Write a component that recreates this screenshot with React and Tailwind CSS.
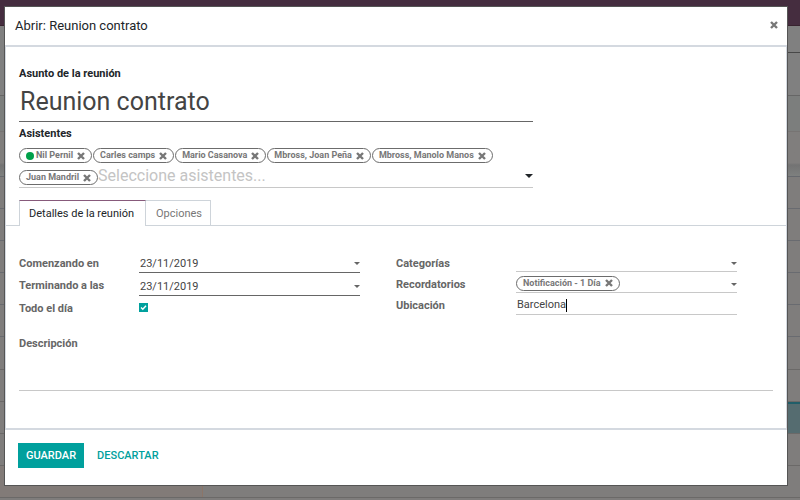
import React from 'react';

function Caret({ className }) {
  return (
    <svg viewBox="0 0 8 4" aria-hidden="true" className={className}>
      <path d="M0 0h8L4 4z" fill="currentColor" />
    </svg>
  );
}

function Cross({ className }) {
  return (
    <svg viewBox="0 0 8 8" aria-hidden="true" className={className}>
      <path d="M1 1l6 6M7 1L1 7" stroke="currentColor" strokeWidth="2.4" fill="none" />
    </svg>
  );
}

function Tag({ children, online }) {
  return (
    <li className="flex h-[15px] items-center rounded-full border border-[#6c6c6c] px-[6px] text-[9px] font-bold leading-[13px] whitespace-nowrap text-[#777]">
      {online && <span className="mr-0.5 size-2 rounded-full bg-[#00a04a]" />}
      {children}
      <button type="button" aria-label="Quitar" className="ml-1">
        <Cross className="size-2" />
      </button>
    </li>
  );
}

function Row({ id, label, height, border, children }) {
  return (
    <div className="flex">
      <label htmlFor={id} className="w-[120px] shrink-0 pt-1 font-bold leading-[14px] text-[#666]">
        {label}
      </label>
      <div className={`flex min-w-0 flex-1 items-center ${height} ${border}`}>{children}</div>
    </div>
  );
}

function DateField({ id }) {
  return (
    <>
      <input id={id} defaultValue="23/11/2019" className="h-full min-w-0 flex-1 px-px pt-0.5 text-[#444] outline-none" />
      <button type="button" aria-label="Abrir calendario" className="pt-0.5">
        <Caret className="h-[3px] w-[6px] text-[#666]" />
      </button>
    </>
  );
}

const line = 'border-b border-[#c8c8c8]';
const darkLine = 'border-b border-[#666]';
const calendarRows = Array.from({ length: 5 }, (_, i) => i);

function Backdrop() {
  return (
    <div aria-hidden="true" className="flex h-screen flex-col overflow-hidden bg-[#7f7d7c]">
      <div className="h-[26px] shrink-0 border-b border-[#38232f] bg-[#452d3f]" />
      <div className="flex h-[70px] shrink-0 flex-col border-b border-[#666] bg-[#808080]">
        <div className="ml-auto h-[27px] w-4 border-b border-[#484848]" />
      </div>
      <div className="h-9 shrink-0 border-b border-[#777473] bg-[#7c7e7d]" />
      <div className="h-[45px] shrink-0 border-b border-[#66696e] bg-linear-to-b from-[#807e7d] from-70% via-[#737373] via-75% to-[#7e807f]" />
      {calendarRows.map((row) => (
        <div key={row} className="h-8 shrink-0 border-b border-[#696b70]" />
      ))}
      <div className="h-[33px] shrink-0 border-b border-[#6b6968]" />
      <div className="h-8 shrink-0 border-b border-[#6b6968]" />
      <div className="flex h-8 shrink-0 flex-row-reverse border-b border-[#6b6968]">
        <div className="w-4 border-t-2 border-[#205e69] bg-[#556c70]" />
      </div>
      <div className="h-8 shrink-0 border-b border-[#6b6968]" />
      <div className="h-8 shrink-0 border-b border-[#6b6968]">
        <div className="h-full w-[203px] border-r border-[#8c7568] bg-[#827b78]" />
      </div>
    </div>
  );
}

export default function App() {
  return (
    <div className="relative font-['Roboto',sans-serif] text-[11px] text-[#212529]">
      <Backdrop />
      <div
        role="dialog"
        aria-labelledby="titulo"
        className="absolute top-[7px] right-[13px] left-[5px] bg-white shadow-[0_0_0_1px_#555]"
      >
        <header className="flex h-[38px] items-center justify-between pr-[9px] pl-[10px]">
          <h1 id="titulo" className="text-[13px] leading-5">Abrir: Reunion contrato</h1>
          <button type="button" aria-label="Cerrar" className="pb-0.5 text-[#777]">
            <Cross className="size-2" />
          </button>
        </header>

        <form className="border-x border-y-2 border-[#d4d9e0] pt-5 pb-[37px]">
          <div className="mr-[253px] ml-[13px]">
            <label htmlFor="asunto" className="block font-bold leading-[14px]">Asunto de la reunión</label>
            <input
              id="asunto"
              defaultValue="Reunion contrato"
              className="block h-[41px] w-full border-b border-[#666] px-px text-[25px] text-[#444] outline-none"
            />
            <label htmlFor="asistentes" className="mt-[5px] block font-bold leading-[14px]">Asistentes</label>
            <div className="mt-[7px] flex items-end border-b border-[#c8c8c8]">
              <ul className="flex flex-1 flex-wrap items-center gap-x-px gap-y-[2px]">
                <Tag online>Nil Pernil</Tag>
                <Tag>Carles camps</Tag>
                <Tag>Mario Casanova</Tag>
                <Tag>Mbross, Joan Peña</Tag>
                <Tag>Mbross, Manolo Manos</Tag>
                <li className="flex w-full items-center">
                  <ul className="flex pt-[3px]">
                    <Tag>Juan Mandril</Tag>
                  </ul>
                  <input
                    id="asistentes"
                    placeholder="Seleccione asistentes..."
                    className="h-[22px] min-w-0 flex-1 text-base outline-none placeholder:text-[#c4c4c4]"
                  />
                </li>
              </ul>
              <button type="button" aria-label="Mostrar asistentes" className="pb-[9px]">
                <Caret className="h-1 w-2" />
              </button>
            </div>
          </div>

          <div role="tablist" className="mt-3 flex h-[26px] border-b border-[#ced4da] pl-[13px]">
            <button
              type="button"
              role="tab"
              aria-selected="true"
              className="-mb-px h-[26px] border-x border-t border-x-[#ced4da] border-t-[#875a7b] bg-white pt-px pr-[11px] pl-[9px]"
            >
              Detalles de la reunión
            </button>
            <button
              type="button"
              role="tab"
              aria-selected="false"
              className="border-t border-r border-[#ced4da] pt-0.5 pr-2 pl-[10px] text-[#777]"
            >
              Opciones
            </button>
          </div>

          <div className="mr-[49px] ml-[13px] grid grid-cols-[341fr_341fr] gap-x-9 pt-[27px]">
            <div className="flex flex-col gap-[2px]">
              <Row id="inicio" label="Comenzando en" height="h-5" border={darkLine}>
                <DateField id="inicio" />
              </Row>
              <Row id="fin" label="Terminando a las" height="h-[21px]" border={darkLine}>
                <DateField id="fin" />
              </Row>
              <Row id="dia" label="Todo el día" height="h-[19px]" border="">
                <span className="grid">
                  <input
                    id="dia"
                    type="checkbox"
                    defaultChecked
                    className="col-start-1 row-start-1 size-[9px] appearance-none bg-[#00a09d]"
                  />
                  <svg viewBox="0 0 9 9" aria-hidden="true" className="pointer-events-none col-start-1 row-start-1 size-[9px]">
                    <path d="M2 4.5l1.8 1.7L7 2.8" fill="none" stroke="#fff" strokeWidth="1.4" />
                  </svg>
                </span>
              </Row>
            </div>
            <div className="flex flex-col gap-[2px]">
              <Row id="categorias" label="Categorías" height="h-[19px]" border={line}>
                <select id="categorias" className="h-full min-w-0 flex-1 appearance-none outline-none">
                  <option></option>
                </select>
                <Caret className="mt-0.5 h-[3px] w-[6px] text-[#666]" />
              </Row>
              <Row id="recordatorios" label="Recordatorios" height="h-[19px]" border={line}>
                <ul>
                  <Tag>Notificación - 1 Día</Tag>
                </ul>
                <select id="recordatorios" className="h-full min-w-0 flex-1 appearance-none outline-none">
                  <option></option>
                </select>
                <Caret className="mt-0.5 h-[3px] w-[6px] text-[#666]" />
              </Row>
              <Row id="ubicacion" label="Ubicación" height="h-5" border={line}>
                <input
                  id="ubicacion"
                  defaultValue="Barcelona"
                  className="mt-0.5 field-sizing-content h-[13px] border-r border-black pl-px text-[#444] outline-none"
                />
              </Row>
            </div>
          </div>

          <div className="mx-[13px] mt-5">
            <label htmlFor="descripcion" className="block font-bold leading-[14px] text-[#666]">Descripción</label>
            <textarea id="descripcion" className="block h-10 w-full resize-none border-b border-[#c8c8c8] outline-none" />
          </div>
        </form>

        <footer className="flex gap-1 px-[13px] pt-[13px] pb-[17px] font-medium">
          <button type="button" className="h-[25px] bg-[#00a09d] px-2 pt-px text-white">GUARDAR</button>
          <button type="button" className="h-[25px] px-[9px] pt-px text-[#00a09d]">DESCARTAR</button>
        </footer>
      </div>
    </div>
  );
}
